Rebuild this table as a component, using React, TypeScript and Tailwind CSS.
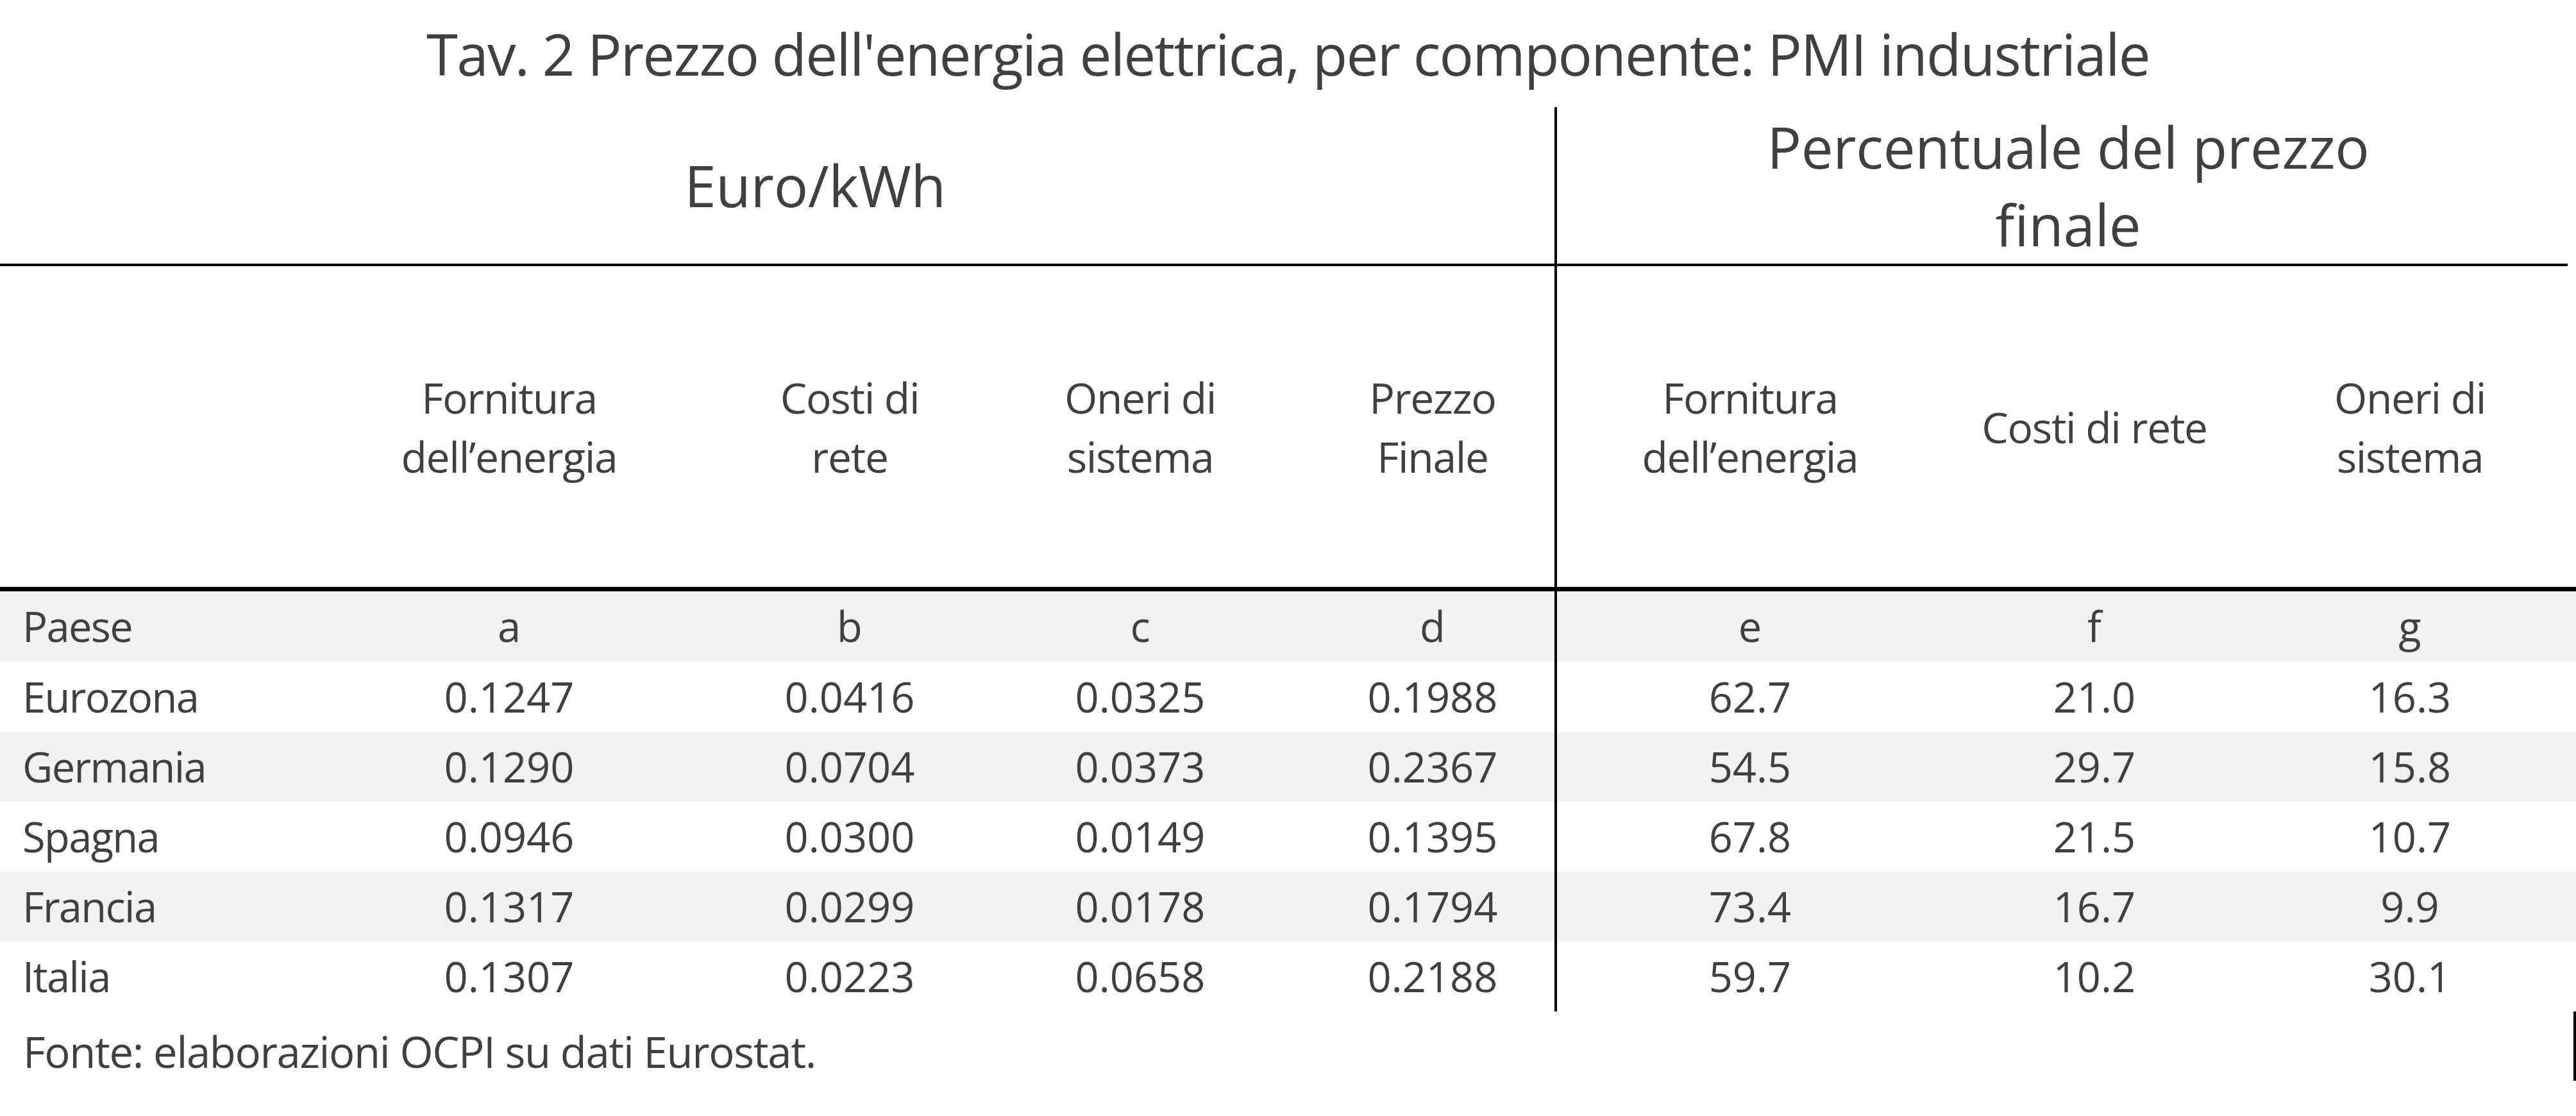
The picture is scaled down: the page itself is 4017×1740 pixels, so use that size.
const cols =
    "grid grid-cols-[450px_688px_374px_532px_380px_4px_602px_472px_512px_1fr]";

const rows = [
    ["Eurozona", "0.1247", "0.0416", "0.0325", "0.1988", "62.7", "21.0", "16.3"],
    ["Germania", "0.1290", "0.0704", "0.0373", "0.2367", "54.5", "29.7", "15.8"],
    ["Spagna", "0.0946", "0.0300", "0.0149", "0.1395", "67.8", "21.5", "10.7"],
    ["Francia", "0.1317", "0.0299", "0.0178", "0.1794", "73.4", "16.7", "9.9"],
    ["Italia", "0.1307", "0.0223", "0.0658", "0.2188", "59.7", "10.2", "30.1"],
];

const leftHeads = [
    ["Fornitura", "dell’energia"],
    ["Costi di", "rete"],
    ["Oneri di", "sistema"],
    ["Prezzo", "Finale"],
];

const rightHeads = [["Fornitura", "dell’energia"], ["Costi di rete"], ["Oneri di", "sistema"]];

function Row({ cells, gray, height }: { cells: string[]; gray: boolean; height: string }) {
    return (
        <div className={`${cols} ${height} ${gray ? "bg-[#f2f2f2]" : "bg-white"}`}>
            <div className="flex items-center pl-[35px] tracking-[-0.025em]">{cells[0]}</div>
            {cells.slice(1, 5).map((c, i) => (
                <div key={i} className="flex items-center justify-center">
                    {c}
                </div>
            ))}
            <div className="bg-black" />
            {cells.slice(5).map((c, i) => (
                <div key={i} className="flex items-center justify-center">
                    {c}
                </div>
            ))}
            <div />
        </div>
    );
}

export default function App() {
    return (
        <div className="w-[4017px] h-[1740px] bg-white text-[#404040] [font-family:'Open_Sans',sans-serif] [font-variant-ligatures:none]">
            <div className="h-[167px] flex items-center justify-center text-[89px] leading-none tracking-[-0.02em]">
                Tav. 2 Prezzo dell'energia elettrica, per componente: PMI industriale
            </div>

            {/* group headers */}
            <div className={`${cols} h-[248px] tracking-[-0.02em]`}>
                <div className="col-span-5 border-b-4 border-black flex items-center justify-center pl-[118px] text-[89px]">
                    Euro/kWh
                </div>
                <div className="bg-black" />
                <div className="col-span-4 mr-[13px] border-b-4 border-black flex items-center justify-center pl-[18px] text-[89px] leading-[121px] text-center">
                    <div>
                        Percentuale del prezzo
                        <br />
                        finale
                    </div>
                </div>
            </div>

            {/* column headers */}
            <div className={`${cols} h-[500px] text-[66px] leading-[92px] text-center tracking-[-0.02em]`}>
                <div />
                {leftHeads.map((h) => (
                    <div key={h[0]} className="flex items-center justify-center">
                        <div>
                            {h.map((l) => (
                                <div key={l}>{l}</div>
                            ))}
                        </div>
                    </div>
                ))}
                <div className="bg-black" />
                {rightHeads.map((h) => (
                    <div key={h[0]} className="flex items-center justify-center">
                        <div>
                            {h.map((l) => (
                                <div key={l}>{l}</div>
                            ))}
                        </div>
                    </div>
                ))}
                <div />
            </div>

            <div className="h-[7px] bg-black" />

            <div className="text-[65px]">
                <Row cells={["Paese", "a", "b", "c", "d", "e", "f", "g"]} gray height="h-[110px]" />
                {rows.map((r, i) => (
                    <Row key={r[0]} cells={r} gray={i % 2 === 1} height="h-[109px]" />
                ))}
            </div>

            <div className="h-[108px] flex items-center pl-[36px] pt-[16px] border-r-4 border-black text-[67px] tracking-[-0.02em]">
                Fonte: elaborazioni OCPI su dati Eurostat.
            </div>
        </div>
    );
}
